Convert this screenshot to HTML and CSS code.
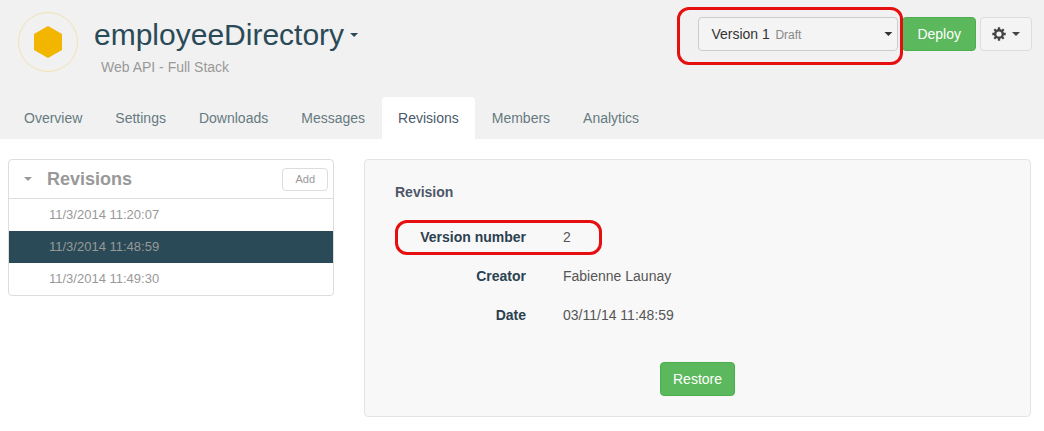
FILE: index.html
```html
<!DOCTYPE html>
<html lang="en">
<head>
<meta charset="utf-8">
<meta name="viewport" content="width=device-width, initial-scale=1">
<title>employeeDirectory - Revisions</title>
<link rel="stylesheet" href="styles.css">
</head>
<body>
<header class="header">
  <div class="header-top">
    <svg class="logo" viewBox="0 0 60 60" aria-hidden="true">
      <circle cx="30" cy="30" r="29.5" fill="none" stroke="#f0e2b4"/>
      <path d="M30 14 44 22V38L30 46 16 38V22Z" fill="#f2b500"/>
    </svg>
    <div class="heading">
      <h1 class="title"><button class="title-button" type="button">employeeDirectory<span class="caret"></span></button></h1>
      <p class="subtitle">Web API - Full Stack</p>
    </div>
    <div class="actions">
      <div class="picker highlight">
        <select class="picker-select" id="version" aria-label="Version">
          <option>Version 1</option>
        </select>
        <label class="picker-state" for="version">Draft</label>
        <span class="caret picker-caret"></span>
      </div>
      <button class="button button-success button-wide" type="button">Deploy</button>
      <button class="button button-default" type="button" aria-label="Options">
        <svg class="gear" viewBox="0 0 14 14" aria-hidden="true">
          <circle cx="7" cy="7" r="3.8" fill="none" stroke="#444" stroke-width="2.4"/>
          <path d="M7 .3V3M7 11v2.700M.3 7H3M11 7h2.700M2.300 2.300 4 4M10 10l1.700 1.700M2.300 11.700 4 10M10 4l1.700-1.700" fill="none" stroke="#444" stroke-width="2.300"/>
        </svg>
        <span class="caret"></span>
      </button>
    </div>
  </div>
  <nav class="tabs">
    <a class="tab" href="#overview">Overview</a>
    <a class="tab" href="#settings">Settings</a>
    <a class="tab" href="#downloads">Downloads</a>
    <a class="tab" href="#messages">Messages</a>
    <a class="tab tab-active" href="#revisions" aria-current="page">Revisions</a>
    <a class="tab" href="#members">Members</a>
    <a class="tab" href="#analytics">Analytics</a>
  </nav>
</header>
<main class="content">
  <aside class="list">
    <div class="list-header">
      <span class="caret"></span>
      <h2 class="list-title">Revisions</h2>
      <button class="add" type="button">Add</button>
    </div>
    <a class="list-item" href="#r1">11/3/2014 11:20:07</a>
    <a class="list-item list-item-active" href="#r2">11/3/2014 11:48:59</a>
    <a class="list-item" href="#r3">11/3/2014 11:49:30</a>
  </aside>
  <section class="panel">
    <h3 class="panel-title">Revision</h3>
    <dl class="details">
      <div class="detail highlight"><dt class="term">Version number</dt><dd class="value">2</dd></div>
      <div class="detail"><dt class="term">Creator</dt><dd class="value">Fabienne Launay</dd></div>
      <div class="detail"><dt class="term">Date</dt><dd class="value">03/11/14 11:48:59</dd></div>
    </dl>
    <button class="button button-success" type="button">Restore</button>
  </section>
</main>
</body>
</html>
```
FILE: styles.css
```css
*, *::after { box-sizing: border-box; }

body {
  margin: 0;
  background: #fff;
  color: #555;
  font-family: "Liberation Sans", Arial, sans-serif;
  font-size: 14px;
  line-height: 20px;
}

h1, h2, h3, p, dl, dd { margin: 0; }
a { color: inherit; text-decoration: none; }
button, select { font: inherit; color: inherit; cursor: pointer; }

.caret {
  flex: none;
  width: 8px;
  height: 4px;
  background: currentColor;
  clip-path: polygon(0 0, 100% 0, 50% 100%);
}

.highlight { position: relative; }
.highlight::after {
  content: "";
  position: absolute;
  border: 3px solid #e60f0f;
  border-radius: 12px;
  pointer-events: none;
}

.header { background: #f1f1f1; }
.header-top {
  display: flex;
  align-items: flex-start;
  padding: 12px 12px 0 18px;
}
.logo { flex: none; width: 60px; height: 60px; }
.heading { margin-left: 16px; }
.title { padding-top: 5px; font-size: 30px; font-weight: 400; line-height: 36px; }
.title-button {
  display: flex;
  align-items: center;
  gap: 6px;
  padding: 0;
  border: 0;
  background: none;
  color: #2b4a57;
}
.subtitle { padding: 4px 0 0 7px; color: #999; }

.actions {
  display: flex;
  gap: 4px;
  margin-left: auto;
  padding-top: 5px;
}
.picker {
  display: grid;
  grid-template-columns: 76px 1fr 8px;
  align-items: center;
  width: 200px;
  padding-right: 5px;
  border: 1px solid #ccc;
  border-radius: 4px;
  background: #f4f4f4;
  color: #333;
}
.picker::after { inset: -11px -6px -15px -22px; }
.picker-select {
  grid-area: 1 / 1 / 2 / 4;
  height: 32px;
  padding: 0 12px;
  border: 0;
  background: none;
  appearance: none;
}
.picker-state {
  grid-area: 1 / 2;
  padding-top: 1px;
  color: #888;
  font-size: 12px;
  pointer-events: none;
}
.picker-caret { grid-area: 1 / 3; pointer-events: none; }

.button {
  display: flex;
  align-items: center;
  justify-content: center;
  gap: 6px;
  height: 34px;
  padding: 0 12px;
  border: 1px solid;
  border-radius: 4px;
}
.button-success { border-color: #4cae4c; background: #5cb85c; color: #fff; }
.button-wide { padding: 0 14px; }
.button-default { padding: 0 11px; border-color: #ddd; background: #f4f4f4; color: #444; }
.gear { width: 14px; height: 14px; }

.tabs { display: flex; gap: 1px; padding: 20px 8px 0; color: #677a80; }
.tab {
  padding: 11px 16px;
  border-radius: 4px 4px 0 0;
}
.tab-active { background: #fff; color: #4b5a6b; }

.content {
  display: grid;
  grid-template-columns: 326px 1fr;
  align-items: start;
  gap: 30px;
  padding: 20px 13px 14px 8px;
}
.list {
  overflow: hidden;
  border: 1px solid #ddd;
  border-radius: 4px;
  color: #999;
}
.list-header {
  display: flex;
  align-items: center;
  height: 39px;
  padding: 0 5px 0 15px;
  border-bottom: 1px solid #ddd;
}
.list-title { margin-left: 15px; font-size: 18px; font-weight: 700; }
.add {
  height: 23px;
  margin-left: auto;
  padding: 0 12px;
  border: 1px solid #ddd;
  border-radius: 4px;
  background: #fff;
  font-size: 11px;
}
.list-item { display: block; height: 32px; padding: 6px 40px; font-size: 13px; }
.list-item-active { background: #2a4a57; }

.panel {
  display: flex;
  flex-direction: column;
  align-items: center;
  padding: 22px 30px 20px;
  border: 1px solid #e3e3e3;
  border-radius: 4px;
  background: #f8f8f8;
}
.panel-title { align-self: stretch; color: #4f5669; font-size: 14px; }
.details {
  display: grid;
  gap: 19px;
  align-self: stretch;
  padding: 25px 0 37px;
}
.detail {
  display: grid;
  grid-template-columns: 131px 1fr;
  gap: 37px;
}
.detail.highlight::after { inset: -7px auto -8px 0; width: 207px; }
.term { color: #2b4150; font-weight: 700; text-align: right; }
```
